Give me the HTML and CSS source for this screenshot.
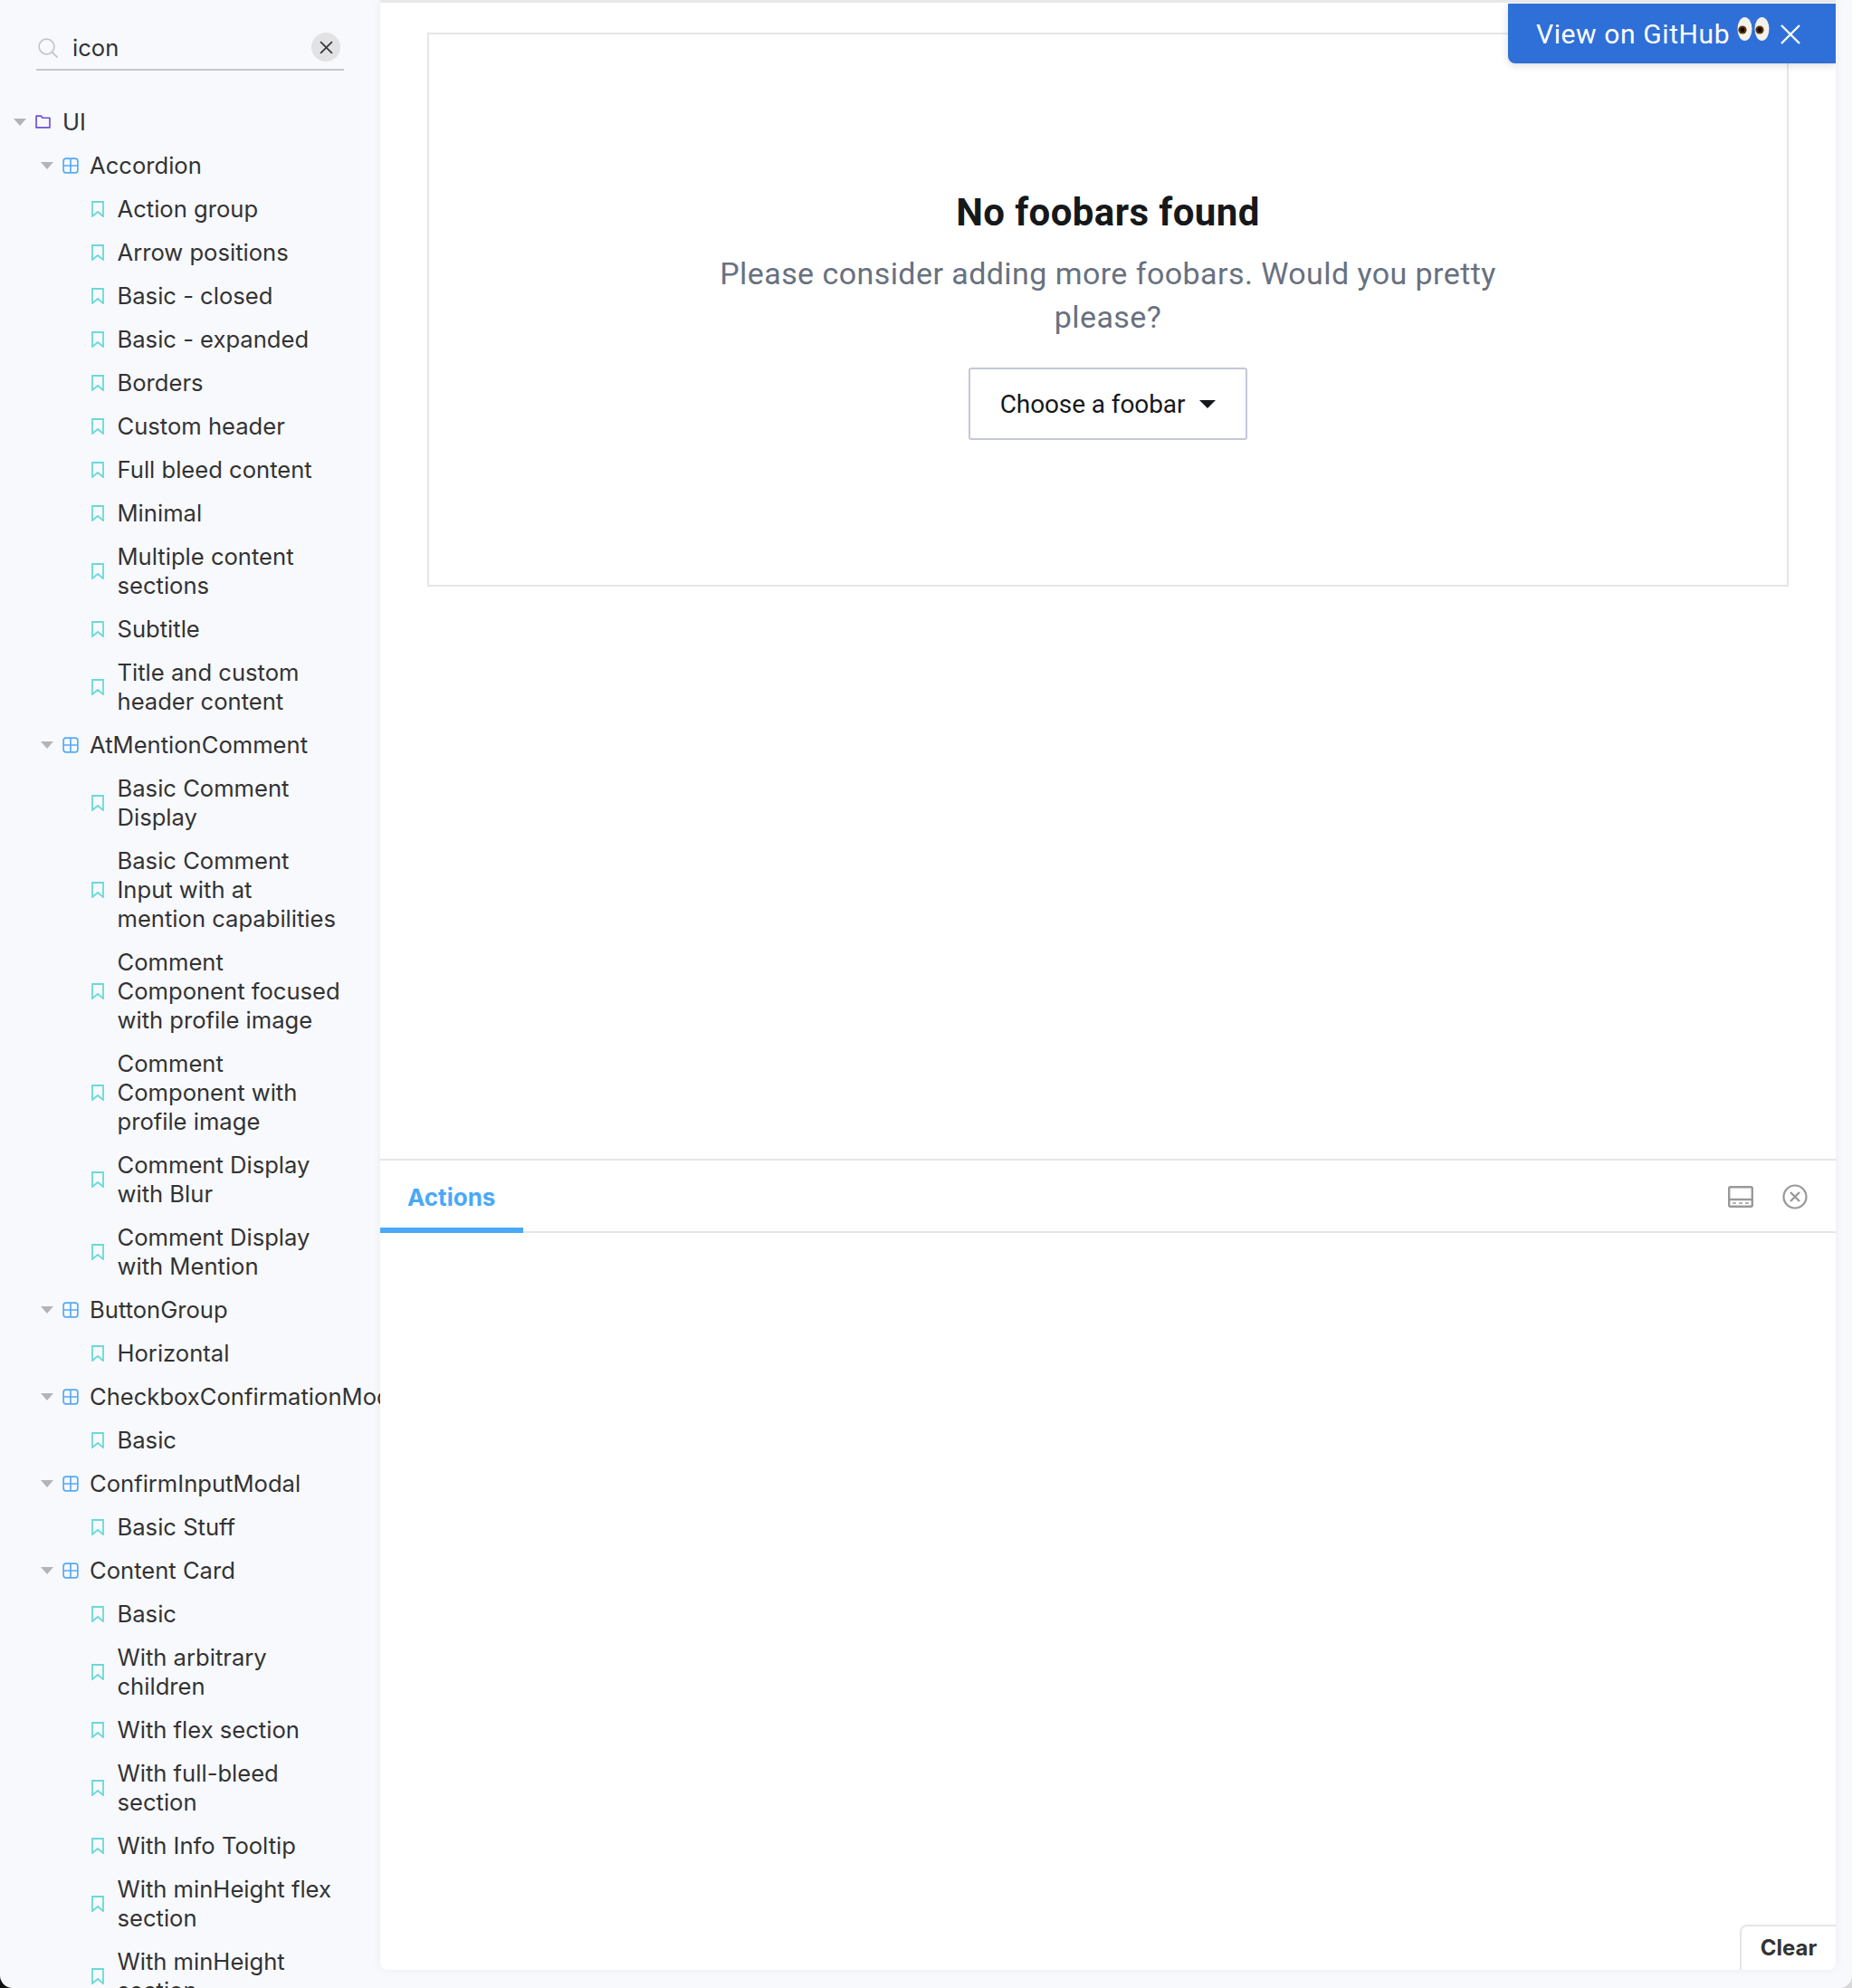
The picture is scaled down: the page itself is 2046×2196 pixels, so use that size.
FILE: index.html
```html
<!DOCTYPE html>
<html lang="en">
<head>
<meta charset="utf-8">
<title>Storybook</title>
<link rel="stylesheet" href="styles.css">
</head>
<body>
<svg class="sprites" width="0" height="0" aria-hidden="true">
  <symbol id="caret" viewBox="0 0 14 8"><path d="M0 0h14L7 8z" fill="#b4b4b8"/></symbol>
  <symbol id="folder" viewBox="0 0 16 14"><path d="M1 1h5l1.5 2H15v10H1z" fill="none" stroke="#6f4fe0" stroke-width="1.6" stroke-linejoin="round"/></symbol>
  <symbol id="comp" viewBox="0 0 16 16"><rect x="1" y="1" width="14" height="14" rx="2.5" fill="none" stroke="#55aaf8" stroke-width="1.5"/><path d="M8 1v14M1 8h14" stroke="#55aaf8" stroke-width="1.5"/></symbol>
  <symbol id="mark" viewBox="0 0 14 18"><path d="M1 1h12v16l-6-5-6 5z" fill="none" stroke="#69d9d9" stroke-width="1.8"/></symbol>
</svg>
<div class="app">
  <aside class="sidebar">
    <div class="search">
      <svg class="search-icon" viewBox="0 0 22 22"><circle cx="9.5" cy="9.5" r="8.4" fill="none" stroke="#c4c4c8" stroke-width="1.6"/><path d="M15.5 15.5l6 6" stroke="#c4c4c8" stroke-width="1.8"/></svg>
      <span class="search-text">icon</span>
      <span class="search-clear"><svg viewBox="0 0 14 14"><path d="M1 1l12 12M13 1L1 13" stroke="#333" stroke-width="1.5"/></svg></span>
    </div>
    <ul class="tree">
      <li class="row root"><svg class="caret"><use href="#caret"/></svg><svg class="ic-folder"><use href="#folder"/></svg><span>UI</span></li>
      <li class="row comp"><svg class="caret"><use href="#caret"/></svg><svg class="ic-comp"><use href="#comp"/></svg><span>Accordion</span></li>
      <li class="row leaf"><svg class="ic-mark"><use href="#mark"/></svg><span>Action group</span></li>
      <li class="row leaf"><svg class="ic-mark"><use href="#mark"/></svg><span>Arrow positions</span></li>
      <li class="row leaf"><svg class="ic-mark"><use href="#mark"/></svg><span>Basic - closed</span></li>
      <li class="row leaf"><svg class="ic-mark"><use href="#mark"/></svg><span>Basic - expanded</span></li>
      <li class="row leaf"><svg class="ic-mark"><use href="#mark"/></svg><span>Borders</span></li>
      <li class="row leaf"><svg class="ic-mark"><use href="#mark"/></svg><span>Custom header</span></li>
      <li class="row leaf"><svg class="ic-mark"><use href="#mark"/></svg><span>Full bleed content</span></li>
      <li class="row leaf"><svg class="ic-mark"><use href="#mark"/></svg><span>Minimal</span></li>
      <li class="row leaf"><svg class="ic-mark"><use href="#mark"/></svg><span>Multiple content sections</span></li>
      <li class="row leaf"><svg class="ic-mark"><use href="#mark"/></svg><span>Subtitle</span></li>
      <li class="row leaf"><svg class="ic-mark"><use href="#mark"/></svg><span>Title and custom header content</span></li>
      <li class="row comp"><svg class="caret"><use href="#caret"/></svg><svg class="ic-comp"><use href="#comp"/></svg><span>AtMentionComment</span></li>
      <li class="row leaf"><svg class="ic-mark"><use href="#mark"/></svg><span>Basic Comment Display</span></li>
      <li class="row leaf"><svg class="ic-mark"><use href="#mark"/></svg><span>Basic Comment Input with at mention capabilities</span></li>
      <li class="row leaf"><svg class="ic-mark"><use href="#mark"/></svg><span>Comment Component focused with profile image</span></li>
      <li class="row leaf"><svg class="ic-mark"><use href="#mark"/></svg><span>Comment Component with profile image</span></li>
      <li class="row leaf"><svg class="ic-mark"><use href="#mark"/></svg><span>Comment Display with Blur</span></li>
      <li class="row leaf"><svg class="ic-mark"><use href="#mark"/></svg><span>Comment Display with Mention</span></li>
      <li class="row comp"><svg class="caret"><use href="#caret"/></svg><svg class="ic-comp"><use href="#comp"/></svg><span>ButtonGroup</span></li>
      <li class="row leaf"><svg class="ic-mark"><use href="#mark"/></svg><span>Horizontal</span></li>
      <li class="row comp nowrap"><svg class="caret"><use href="#caret"/></svg><svg class="ic-comp"><use href="#comp"/></svg><span>CheckboxConfirmationModal</span></li>
      <li class="row leaf"><svg class="ic-mark"><use href="#mark"/></svg><span>Basic</span></li>
      <li class="row comp"><svg class="caret"><use href="#caret"/></svg><svg class="ic-comp"><use href="#comp"/></svg><span>ConfirmInputModal</span></li>
      <li class="row leaf"><svg class="ic-mark"><use href="#mark"/></svg><span>Basic Stuff</span></li>
      <li class="row comp"><svg class="caret"><use href="#caret"/></svg><svg class="ic-comp"><use href="#comp"/></svg><span>Content Card</span></li>
      <li class="row leaf"><svg class="ic-mark"><use href="#mark"/></svg><span>Basic</span></li>
      <li class="row leaf"><svg class="ic-mark"><use href="#mark"/></svg><span>With arbitrary children</span></li>
      <li class="row leaf"><svg class="ic-mark"><use href="#mark"/></svg><span>With flex section</span></li>
      <li class="row leaf"><svg class="ic-mark"><use href="#mark"/></svg><span>With full-bleed section</span></li>
      <li class="row leaf"><svg class="ic-mark"><use href="#mark"/></svg><span>With Info Tooltip</span></li>
      <li class="row leaf"><svg class="ic-mark"><use href="#mark"/></svg><span>With minHeight flex section</span></li>
      <li class="row leaf"><svg class="ic-mark"><use href="#mark"/></svg><span>With minHeight section</span></li>
    </ul>
  </aside>
  <main class="panel">
    <section class="preview">
      <div class="empty">
        <h1 class="empty-title">No foobars found</h1>
        <p class="empty-body">Please consider adding more foobars. Would you pretty please?</p>
        <button class="choose">Choose a foobar<i class="choose-caret"></i></button>
      </div>
    </section>
    <section class="addons">
      <div class="tabs">
        <span class="tab">Actions</span>
        <span class="tab-tools">
          <svg class="tool" viewBox="0 0 28 24"><rect x="1.2" y="1.2" width="25.6" height="21.6" rx="1.5" fill="none" stroke="#999" stroke-width="2.4"/><path d="M1 15h26" stroke="#999" stroke-width="2.4"/><path d="M5 19h4M12 19h4M19 19h4" stroke="#999" stroke-width="1.6"/></svg>
          <svg class="tool" viewBox="0 0 28 28"><circle cx="14" cy="14" r="12.5" fill="none" stroke="#999" stroke-width="2.2"/><path d="M9 9l10 10M19 9L9 19" stroke="#999" stroke-width="2.4"/></svg>
        </span>
      </div>
      <div class="log"><button class="clear">Clear</button></div>
    </section>
    <div class="banner">
      <span class="banner-text">View on GitHub</span>
      <svg class="eyes" viewBox="0 0 36 28"><ellipse cx="8.5" cy="14" rx="8" ry="13" fill="#f5f2ea"/><ellipse cx="27.5" cy="14" rx="8" ry="13" fill="#f5f2ea"/><circle cx="6" cy="15" r="4.6" fill="#5a3208"/><circle cx="25" cy="15" r="4.6" fill="#5a3208"/><circle cx="6" cy="15" r="2.4" fill="#120800"/><circle cx="25" cy="15" r="2.4" fill="#120800"/></svg>
      <svg class="banner-x" viewBox="0 0 22 22"><path d="M1 1l20 20M21 1L1 21" stroke="#fff" stroke-width="2.4"/></svg>
    </div>
  </main>
</div>
</body>
</html>
```
FILE: styles.css
```css
* { box-sizing: border-box; }
html, body { margin: 0; height: 100%; }
body {
  background: linear-gradient(to right, #111 50%, #d8d8dc 50%);
  font-family: Inter, "Liberation Sans", sans-serif;
  color: #333;
  overflow: hidden;
}
.sprites { position: absolute; }
.app {
  display: flex;
  height: 2196px;
  background: #f8f9fd;
  border-radius: 0 0 14px 14px;
  overflow: hidden;
}
.sidebar {
  width: 420px;
  flex: none;
  overflow: hidden;
}
.search {
  display: flex;
  align-items: center;
  margin: 35px 40px 0;
  border-bottom: 2px solid #c8c8cc;
  height: 43px;
}
.search-icon { width: 22px; height: 22px; flex: none; margin: -6px 18px 0 2px; }
.search-text { flex: 1; font-size: 25.6px; line-height: 32px; margin-top: -5px; margin-left: -2px; }
.search-clear {
  width: 32px; height: 32px; border-radius: 50%;
  background: #e2e2e4;
  display: flex; align-items: center; justify-content: center;
  margin-right: 4px; margin-top: -7px;
}
.search-clear svg { width: 15px; height: 15px; }
.tree { list-style: none; margin: 32.5px 0 0; padding: 0; }
.row {
  display: flex;
  align-items: center;
  padding: 8px 40px 8px 0;
  font-size: 25.6px;
  line-height: 32px;
}
.caret { width: 14px; height: 8px; flex: none; }
.root { padding-left: 15px; }
.root .caret { margin-right: 10px; }
.ic-folder { width: 17px; height: 15px; flex: none; margin-right: 13px; }
.comp { padding-left: 45px; }
.comp .caret { margin-right: 10px; }
.ic-comp { width: 18px; height: 18px; flex: none; margin-right: 12px; }
.leaf { padding-left: 101px; }
.ic-mark { width: 14px; height: 18px; flex: none; margin-right: 14.5px; }
.nowrap { white-space: nowrap; padding-right: 0; }

.panel {
  position: relative;
  width: 1608px;
  flex: none;
  height: 2176px;
  background: #fff;
  border-radius: 0 0 8px 8px;
  border-top: 3px solid #e8e8e8;
  box-shadow: 0 0 12px rgba(0,0,0,.05);
  display: flex;
  flex-direction: column;
  overflow: hidden;
}
.preview { height: 1279px; padding: 33px 52px 0; border-bottom: 2px solid #e6e6e6; flex: none; }
.empty {
  height: 612px;
  border: 2px solid #e6e6e6;
  display: flex;
  flex-direction: column;
  align-items: center;
  padding-top: 173px;
}
.empty-title {
  margin: 0;
  font: 700 42px/48px "Roboto", sans-serif;
  letter-spacing: .4px;
  color: #17181a;
}
.empty-body {
  margin: 19px 0 0;
  width: 900px;
  text-align: center;
  font: 400 34px/48px "Roboto", sans-serif;
  letter-spacing: .43px;
  color: #68717f;
}
.choose {
  margin-top: 32px;
  width: 308px; height: 80px;
  background: #fff;
  border: 2px solid #c4c8d6;
  border-radius: 3px;
  font: 400 28px/36px "Roboto", sans-serif;
  letter-spacing: -.1px;
  color: #17181a;
  display: flex; align-items: center; justify-content: center;
  padding: 2px 0 0;
}
.choose-caret {
  width: 0; height: 0; margin-left: 16px; margin-top: -2px;
  border-left: 9px solid transparent;
  border-right: 9px solid transparent;
  border-top: 9px solid #17181a;
}
.addons { flex: 1; display: flex; flex-direction: column; min-height: 0; }
.tabs {
  height: 80px; flex: none;
  display: flex; align-items: center; justify-content: space-between;
  border-bottom: 2px solid #e6e6e6;
}
.tab {
  align-self: stretch;
  margin-bottom: -2px;
  padding: 6px 30px 0;
  width: 158px;
  display: flex; align-items: center;
  font-size: 26px; font-weight: 700;
  color: #4aa8f8;
  border-bottom: 6px solid #4aa8f8;
}
.tab-tools { display: flex; align-items: center; gap: 32px; padding: 2px 31px 0 0; }
.tool { width: 28px; height: 28px; }
.log { flex: 1; position: relative; }
.clear {
  position: absolute; right: 0; bottom: 0;
  width: 106px; height: 50px;
  border: 2px solid #e6e6e6;
  border-width: 2px 0 0 2px;
  border-radius: 8px 0 0 0;
  background: #fff;
  font: 700 24px/30px Inter, sans-serif;
  color: #333;
  padding: 0;
}
.banner {
  position: absolute;
  top: 1px; right: 0;
  width: 362px; height: 66px;
  background: #2f6fd8;
  border-radius: 0 0 0 8px;
  box-shadow: 0 2px 8px rgba(0,0,0,.15);
  display: flex; align-items: center;
  padding-left: 31px;
  color: #fff;
}
.banner-text { font: 400 30px/36px "Roboto", sans-serif; letter-spacing: .6px; padding-top: 2px; }
.eyes { width: 36px; height: 28px; margin-left: 8px; margin-top: -10px; flex: none; }
.banner-x { width: 22px; height: 22px; margin-left: 12px; flex: none; margin-top: 1px; }
```
